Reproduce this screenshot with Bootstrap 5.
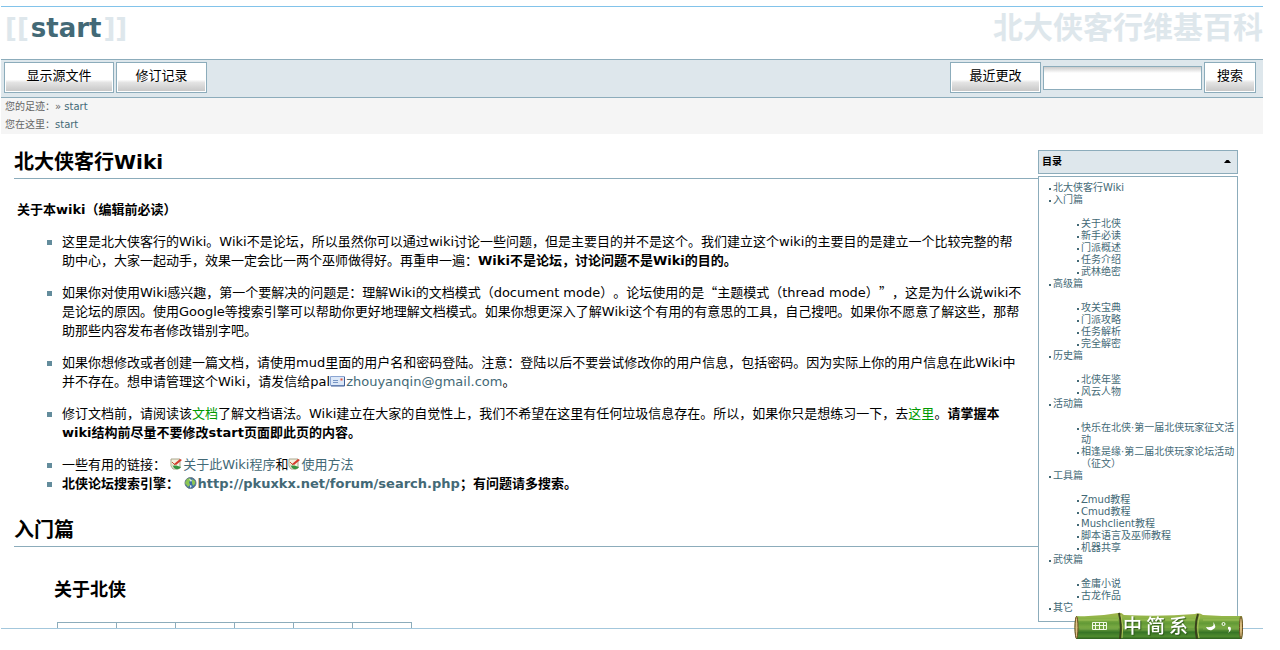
<!DOCTYPE html>
<html lang="zh-CN">
<head>
<meta charset="utf-8">
<meta name="viewport" content="width=device-width, initial-scale=1">
<title>start [北大侠客行维基百科]</title>
<link rel="stylesheet" href="https://cdn.jsdelivr.net/npm/bootstrap@5.3.0/dist/css/bootstrap.min.css">
<style>
  :root { --edge: #8cacbb; --tint: #dee7ec; --link: #436976; --ext: #436976; }
  body { font-family: "DejaVu Sans", "Noto Sans CJK SC", sans-serif; font-size: 13px; line-height: 19px; color: #000; background: #fff; text-spacing-trim: space-all; }
  a { color: var(--link); text-decoration: none; }
  a:hover { text-decoration: underline; }
  .wiki { margin: 6px 17px 0 1px; border-top: 1px solid #82c3ea; border-bottom: 1px solid #a3c7dc; }
  .masthead { height: 52px; padding-left: 4px; color: var(--tint); font-weight: 700; line-height: 42px; }
  .page-id { font-size: 26px; }
  .page-id a { padding: 0 2px; }
  .site-name a { font-size: 30px; color: var(--tint); }
  .toolbar { background: var(--tint); border: solid var(--edge); border-width: 1px 0; padding: 2px 7px 4px 3px; gap: 2px; }
  .search-row { gap: 2px; }
  .wbtn { height: 31px; padding: 0 20px 4px; border: 1px solid var(--edge); border-radius: 0; color: #000; font-size: 13px; line-height: 19px; background: linear-gradient(#fff 58%, #e4e4e4 68%, #c8c8c8) 1px 1px / calc(100% - 2px) calc(100% - 2px) no-repeat #fff; }
  .wbtn-wide { width: 110px; }
  .wbtn-mid { width: 91px; padding-left: 0; padding-right: 0; }
  .wbtn-small { width: 52px; padding-left: 0; padding-right: 0; }
  .wsearch { width: 159px; height: 24px; border: 1px solid var(--edge); border-radius: 0; padding: 2px 4px; font-size: 13px; background: linear-gradient(#ccc, #fff 6px); }
  .crumbs { background: #f5f5f5; color: #666; font-size: 10px; line-height: 18px; padding: 0 4px; height: 36px; }
  .article { padding-left: 13px; padding-top: 16px; min-width: 0; }
  .article h1 { font-size: 20px; line-height: 24px; font-weight: 700; margin: 0; padding-bottom: 4px; border-bottom: 1px solid var(--edge); }
  .lead-in { margin: 21px 3px 13px; font-weight: 700; }
  .points { list-style: none; margin: 0 16px 25px 33px; padding: 0; }
  .points li { padding-left: 15px; margin-bottom: 13px; background: linear-gradient(#638c9c, #638c9c) 0 8px / 5px 5px no-repeat; }
  .points li.tight, .points li:last-child { margin-bottom: 0; }
  .points svg { vertical-align: -1px; margin-right: 1px; }
  .cjk { font-family: "Noto Sans CJK SC", sans-serif; line-height: 1; }
  .exists { color: #090; }
  .article h2 { font-size: 18px; line-height: 22px; font-weight: 700; margin: 32px 0 21px 40px; }
  .topics { margin-left: 43px; width: 355px; border-collapse: collapse; table-layout: fixed; }
  .topics td { border: 1px solid var(--edge); border-bottom: 0; height: 5px; padding: 0; }
  .toc { width: 200px; margin: 16px 25px 6px 0; font-size: 10px; line-height: 12px; }
  .toc-head { width: 100%; height: 24px; margin-bottom: 2px; padding: 0 5px 0 3px; background: var(--tint); border: 1px solid var(--edge); font-weight: 700; color: #000; }
  .toc-body { border: 1px solid var(--edge); padding: 5px 1px 7px 10px; background: #fff; }
  .toc ul { list-style: none; margin: 0; padding: 0; }
  .toc ul ul { margin: 12px 0 0 24px; }
  .toc li { padding-left: 4px; background: linear-gradient(var(--link), var(--link)) 0 6px / 2px 2px no-repeat; }
  .ime { position: fixed; right: 36px; bottom: 11px; width: 170px; height: 27px; color: #fff; }
  .ime-mode { position: absolute; left: 49px; top: 2px; gap: 4px; font: 500 19px/22px "Noto Sans CJK SC", sans-serif; text-shadow: 1px 1px 1px #2c5717; }
</style>
</head>
<body>
<svg class="d-none" aria-hidden="true">
  <symbol id="page-edit" viewBox="0 0 12 12">
    <path d="M1 1h9v9l-2 1H3L1 8z" fill="#f3f1df" stroke="#aaa68c"/>
    <path d="M0 3l2 3 2 1-1 2-2-2z" fill="#d4dbbd"/>
    <path d="M4 6L10 1l2 1-6 5z" fill="#d43c2d"/><path d="M2 4l3 3" fill="none" stroke="#c64d35"/>
    <path d="M3 8c2-1 5 0 8 1-2 3-7 3-8-1z" fill="#369440"/>
  </symbol>
</svg>
<div class="wiki">
  <header class="masthead d-flex justify-content-between">
    <div class="page-id">[[<a href="#start">start</a>]]</div>
    <div class="site-name"><a href="#home">北大侠客行维基百科</a></div>
  </header>
  <nav class="toolbar d-flex align-items-center">
    <button class="wbtn wbtn-wide" type="button">显示源文件</button>
    <button class="wbtn wbtn-mid" type="button">修订记录</button>
    <button class="wbtn wbtn-mid ms-auto" type="button">最近更改</button>
    <form class="search-row d-flex align-items-center" role="search">
      <input class="wsearch" type="text" aria-label="搜索内容">
      <button class="wbtn wbtn-small" type="button">搜索</button>
    </form>
  </nav>
  <div class="crumbs">
    <div>您的足迹：» <a href="#start">start</a></div>
    <div>您在这里：<a href="#start">start</a></div>
  </div>
  <div class="d-flex align-items-start">
    <main class="article flex-grow-1">
      <h1>北大侠客行Wiki</h1>
      <p class="lead-in">关于本wiki（编辑前必读）</p>
      <ul class="points">
        <li>这里是北大侠客行的Wiki。Wiki不是论坛，所以虽然你可以通过wiki讨论一些问题，但是主要目的并不是这个。我们建立这个wiki的主要目的是建立一个比较完整的帮助中心，大家一起动手，效果一定会比一两个巫师做得好。再重申一遍：<strong>Wiki不是论坛，讨论问题不是Wiki的目的。</strong></li>
        <li>如果你对使用Wiki感兴趣，第一个要解决的问题是：理解Wiki的文档模式（document mode）。论坛使用的是<span class="cjk">“</span>主题模式（thread mode）<span class="cjk">”</span>，这是为什么说wiki不是论坛的原因。使用Google等搜索引擎可以帮助你更好地理解文档模式。如果你想更深入了解Wiki这个有用的有意思的工具，自己搜吧。如果你不愿意了解这些，那帮助那些内容发布者修改错别字吧。</li>
        <li>如果你想修改或者创建一篇文档，请使用mud里面的用户名和密码登陆。注意：登陆以后不要尝试修改你的用户信息，包括密码。因为实际上你的用户信息在此Wiki中并不存在。想申请管理这个Wiki，请发信给pal<a href="mailto:zhouyanqin@gmail.com"><svg width="15" height="11" viewBox="0 0 15 11"><path d="M.5.5h14v9H.5z" fill="#dce8f8" stroke="#8ba5d2"/><path d="M1 10h13.500V1" fill="none" stroke="#3f5f98"/><path d="M3 4.500h5M3 6.500h5" stroke="#7795c4"/><path d="M10.500 2.500h2v2h-2z" fill="#e0523c"/></svg>zhouyanqin@gmail.com</a>。</li>
        <li>修订文档前，请阅读该<a class="exists" href="#syntax">文档</a>了解文档语法。Wiki建立在大家的自觉性上，我们不希望在这里有任何垃圾信息存在。所以，如果你只是想练习一下，去<a class="exists" href="#playground">这里</a>。<strong>请掌握本wiki结构前尽量不要修改start页面即此页的内容。</strong></li>
        <li class="tight">一些有用的链接： <a href="#dokuwiki"><svg width="12" height="12"><use href="#page-edit"/></svg>关于此Wiki程序</a>和<a href="#manual"><svg width="12" height="12"><use href="#page-edit"/></svg>使用方法</a></li>
        <li><strong>北侠论坛搜索引擎： <a href="#search"><svg width="13" height="12" viewBox="0 0 13 12"><circle cx="6.500" cy="6" r="5.500" fill="#3e6da8" stroke="#6c7d85"/><path d="M3 2l3-1 1 2-2 2 1 3-2 2-3-4zM8 2l3 2v3L9 9 8 6z" fill="#8cc653"/><path d="M5 2l3 1-1 2zM6 8l2 1-2 2z" fill="#e5f0ef"/></svg>http://pkuxkx.net/forum/search.php</a>；有问题请多搜索。</strong></li>
      </ul>
      <h1>入门篇</h1>
      <h2>关于北侠</h2>
      <table class="topics" aria-label="关于北侠"><tbody><tr><td></td><td></td><td></td><td></td><td></td><td></td></tr></tbody></table>
    </main>
    <aside class="toc flex-shrink-0">
      <button class="toc-head d-flex align-items-center justify-content-between" type="button" aria-expanded="true">目录
        <svg width="9" height="6" viewBox="0 0 9 6"><path d="M1 4h7L5.500 1h-2z" fill="#000"/></svg>
      </button>
      <nav class="toc-body">
        <ul>
          <li><a href="#t1">北大侠客行Wiki</a></li>
          <li><a href="#t2">入门篇</a>
            <ul><li><a href="#t3">关于北侠</a></li><li><a href="#t4">新手必读</a></li><li><a href="#t5">门派概述</a></li><li><a href="#t6">任务介绍</a></li><li><a href="#t7">武林绝密</a></li></ul></li>
          <li><a href="#t8">高级篇</a>
            <ul><li><a href="#t9">攻关宝典</a></li><li><a href="#t10">门派攻略</a></li><li><a href="#t11">任务解析</a></li><li><a href="#t12">完全解密</a></li></ul></li>
          <li><a href="#t13">历史篇</a>
            <ul><li><a href="#t14">北侠年鉴</a></li><li><a href="#t15">风云人物</a></li></ul></li>
          <li><a href="#t16">活动篇</a>
            <ul><li><a href="#t17">快乐在北侠·第一届北侠玩家征文活动</a></li><li><a href="#t18">相逢是缘·第二届北侠玩家论坛活动（征文）</a></li></ul></li>
          <li><a href="#t19">工具篇</a>
            <ul><li><a href="#t20">Zmud教程</a></li><li><a href="#t21">Cmud教程</a></li><li><a href="#t22">Mushclient教程</a></li><li><a href="#t23">脚本语言及巫师教程</a></li><li><a href="#t24">机器共享</a></li></ul></li>
          <li><a href="#t25">武侠篇</a>
            <ul><li><a href="#t26">金庸小说</a></li><li><a href="#t27">古龙作品</a></li></ul></li>
          <li><a href="#t28">其它</a></li>
        </ul>
      </nav>
    </aside>
  </div>
</div>
<div class="ime">
  <svg width="170" height="27" viewBox="0 0 170 27" aria-hidden="true">
    <defs><linearGradient id="bamboo" x2="0" y2="1">
      <stop offset="0" stop-color="#a5b54c"/><stop offset=".2" stop-color="#8db548"/><stop offset=".4" stop-color="#629936"/><stop offset=".55" stop-color="#79aa42"/><stop offset=".75" stop-color="#387526"/><stop offset=".9" stop-color="#4f8b2e"/><stop offset="1" stop-color="#2d601f"/>
    </linearGradient></defs>
    <path d="M2 4Q23 5 44 1Q47 0 50 3Q87 5 121 2Q125 0 129 3L148 4 168 4Q170 15 168 27H2Q-1 15 2 4z" fill="url(#bamboo)"/>
    <path d="M4 8h40M50 8h72M129 8h37" stroke="#b4cf66" opacity=".6"/>
    <path d="M6 17h38M50 18h72M129 17h37" stroke="#a0c565" opacity=".35"/>
    <path d="M45 1q3 11 1 26M124 2q-4 11-1 25" fill="none" stroke="#39401b" stroke-width="2"/>
    <path d="M47 3q3 11 1 23M126 3q-4 11-1 23" fill="none" stroke="#b6c65b"/>
    <ellipse cx="2.500" cy="15.500" rx="1.500" ry="11" fill="#ddc284" stroke="#6b4c20"/>
    <ellipse cx="167" cy="15.500" rx="1.500" ry="11" fill="#ddc284" stroke="#6b4c20"/>
    <path d="M18.500 10.500h14v7h-14zM18 13.500h15M21.500 10v8M25.500 10v8M29.500 10v8" fill="none" stroke="#f1f8e6"/>
    <path d="M139 10q3 6-7 5 2 4 6 3 6-3 1-8z" fill="#fff"/>
    <circle cx="149.500" cy="12" r="1.500" fill="none" stroke="#fff"/>
    <path d="M154 15q3-1 3 2 0 2-3 4 2-3 0-4z" fill="#fff"/>
  </svg>
  <div class="ime-mode d-flex"><span>中</span><span>简</span><span>系</span></div>
</div>
<script src="https://cdn.jsdelivr.net/npm/bootstrap@5.3.0/dist/js/bootstrap.bundle.min.js"></script>
</body>
</html>
